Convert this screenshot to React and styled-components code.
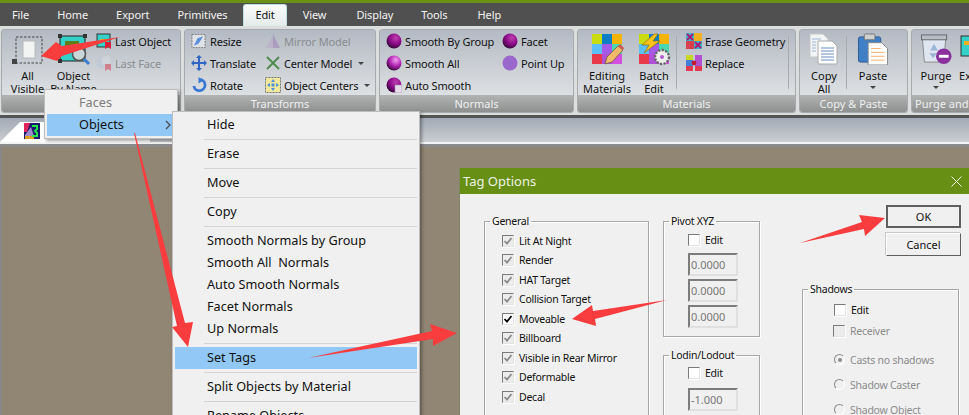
import React from 'react';
import styled, {createGlobalStyle} from 'styled-components';

const Global = createGlobalStyle`
  html, body { margin: 0; padding: 0; background: #918674; }
  body { font-family: "Noto Sans", "Liberation Sans", sans-serif; font-size: 11px; color: #111; }
`;

const Page = styled.div`
  position: relative;
  width: 969px;
  height: 415px;
  overflow: hidden;
  display: flex;
  flex-direction: column;
`;
const TopLine = styled.div`
  height: 3px;
  background: #6b9016;
`;
const TabBar = styled.div`
  height: 23px;
  background: #505050;
  display: flex;
  gap: 28px;
  padding-left: 12px;
  align-items: flex-end;
`;
const Tab = styled.div`
  position: relative;
  height: 22px;
  line-height: 22px;
  margin-left: ${p => p.$nudge || 0}px;
  font-size: 11px;
  letter-spacing: -.1px;
  color: ${p => (p.$active ? '#111' : '#f2f2f2')};
  &::before {
    content: ${p => (p.$active ? '""' : 'none')};
    position: absolute;
    z-index: 0;
    top: 0;
    bottom: 0;
    left: -12px;
    right: -12px;
    background: linear-gradient(#fbfcfc, #e4eaea);
    border: 1px solid #bfe0e0;
    border-bottom: none;
    border-radius: 3px 3px 0 0;
  }
  span { position: relative; }
`;
const Ribbon = styled.div`
  height: 89px;
  background: #dcdede;
  display: flex;
  gap: 2px;
  padding: 3px 0 2px 1px;
  box-sizing: border-box;
`;
const Group = styled.div`
  width: ${p => p.$w}px;
  flex: none;
  display: flex;
  flex-direction: column;
  border: 1px solid #a8abad;
  border-radius: 3px;
  box-sizing: border-box;
  margin-right: 1px;
  overflow: hidden;
  background: linear-gradient(#b4bac4, #e8eaea);
`;
const GroupBody = styled.div`
  flex: 1;
  display: flex;
  min-height: 0;
  padding-left: ${p => p.$pad || 0}px;
`;
const GroupLabel = styled.div`
  height: 17px;
  line-height: 18px;
  text-align: ${p => p.$left ? 'left' : 'center'};
  padding-left: ${p => p.$left ? 3 : 0}px;
  font-size: 11px;
  color: #eef0f0;
  white-space: nowrap;
  background: linear-gradient(#b2b4b4, #8e8f8f);
`;
const Big = styled.div`
  width: ${p => p.$w}px;
  flex: none;
  display: flex;
  flex-direction: column;
  align-items: center;
  padding-top: 3px;
  text-align: center;
  line-height: 13px;
  font-size: 11px;
  white-space: nowrap;
  svg { margin-bottom: 4px; flex: none; }
`;
const Caret = styled.i`
  display: block;
  width: 0;
  height: 0;
  margin: 4px auto 0;
  border: 3px solid transparent;
  border-top: 3px solid #444;
  border-bottom: none;
`;
const Column = styled.div`
  width: ${p => p.$w}px;
  flex: none;
`;
const Small = styled.div`
  height: 22px;
  display: flex;
  align-items: center;
  gap: 3px;
  white-space: nowrap;
  font-size: 11px;
  letter-spacing: -.15px;
  color: ${p => (p.$off ? '#8a8c8e' : '#111')};
  svg { flex: none; }
  i { margin: 0 0 0 3px; }
`;
const VLine = styled.div`
  width: 1px;
  flex: none;
  margin: 6px ${p => p.$gap || 9}px 6px ${p => p.$before || 0}px;
  background: #a8acae;
`;
const DocStrip = styled.div`
  height: 29px;
  border-top: 3px solid #555;
  border-bottom: 2px solid #f4f4f4;
  box-sizing: border-box;
  background: linear-gradient(#a2aab5, #cbced2);
`;
const DocTab = styled.div`
  width: 150px;
  height: 20px;
  margin-top: 4px;
  background: #fff;
  clip-path: polygon(20px 0, 100% 0, 100% 100%, 0 100%);
  padding: 1px 0 0 24px;
  box-sizing: border-box;
`;
const Canvas = styled.div`
  flex: 1;
  background: #918674;
  border-top: 3px solid #8a8a8a;
  border-left: 2px solid #888;
`;
const MenuBox = styled.div`
  position: absolute;
  left: ${p => p.$x}px;
  top: ${p => p.$y}px;
  width: ${p => p.$w}px;
  padding: 2px;
  box-sizing: border-box;
  background: #f0f0f0;
  border: 1px solid #bdbdbd;
  box-shadow: 2px 2px 3px rgba(0, 0, 0, .35);
  font-size: 12.7px;
`;
const MenuRow = styled.div`
  height: 22px;
  line-height: 21px;
  padding-left: ${p => p.$indent}px;
  position: relative;
  white-space: pre;
  color: ${p => (p.$off ? '#7d7d7d' : '#111')};
  background: ${p => (p.$on ? '#91c8f6' : 'transparent')};
  svg { position: absolute; right: 4px; top: 6px; }
`;
const MenuLine = styled.div`
  height: 1px;
  margin: 3px 0 3px 29px;
  background: #d4d4d4;
`;
const Dialog = styled.div`
  position: absolute;
  left: 459px;
  top: 168px;
  width: 510px;
  height: 260px;
  background: #f0f0f0;
  border-left: 1px solid #7f8a60;
  box-sizing: border-box;
`;
const TitleBar = styled.div`
  height: 26px;
  background: #678f14;
  color: #eef2e4;
  font-size: 13px;
  line-height: 26px;
  padding-left: 3px;
  display: flex;
  justify-content: space-between;
  align-items: center;
  svg { margin-right: 7px; }
`;
const DialogBody = styled.div`
  display: flex;
  align-items: flex-start;
  padding: 11px 0 0 24px;
  font-size: 10.5px;
  letter-spacing: -.25px;
`;
const Box = styled.fieldset`
  margin: ${p => p.$m || 0};
  padding: ${p => p.$pad || 0};
  width: ${p => p.$w}px;
  height: ${p => p.$h}px;
  box-sizing: border-box;
  border: 1px solid #a6a6a6;
  box-shadow: 1px 1px 0 #fff, inset 1px 1px 0 #fff;
  flex: none;
  legend {
    padding: 0 2px;
    margin-left: 5px;
    line-height: 16px;
  }
`;
const MiddleColumn = styled.div`
  width: 97px;
  flex: none;
  margin: 8px 42px 0 14px;
`;
const RightColumn = styled.div`
  width: 159px;
  flex: none;
`;
const CheckRow = styled.div`
  height: ${p => p.$h || 19.5}px;
  display: flex;
  align-items: center;
  gap: 5px;
  white-space: nowrap;
  margin: ${p => p.$top || 0}px 0 ${p => p.$after || 0}px ${p => p.$x || 0}px;
  color: ${p => (p.$off ? '#8c8c8c' : '#111')};
`;
const Tick = styled.span`
  width: 12px;
  height: 12px;
  flex: none;
  box-sizing: border-box;
  display: flex;
  align-items: center;
  justify-content: center;
  border: 1px solid #7a7a7a;
  border-right-color: #e3e3e3;
  border-bottom-color: #e3e3e3;
  box-shadow: 1px 1px 0 #fff;
  background: ${p => (p.$off ? '#ececec' : '#fff')};
`;
const Dot = styled.span`
  width: 11px;
  height: 11px;
  flex: none;
  box-sizing: border-box;
  border-radius: 50%;
  border: 1px solid #8a8a8a;
  border-right-color: #fff;
  border-bottom-color: #fff;
  display: flex;
  align-items: center;
  justify-content: center;
  &::after {
    content: ${p => (p.$on ? '""' : 'none')};
    width: 4px;
    height: 4px;
    border-radius: 50%;
    background: #8c8c8c;
  }
`;
const Field = styled.input`
  display: block;
  width: 50px;
  height: 23px;
  margin: 0 0 3px 24px;
  padding: 0 0 0 1px;
  box-sizing: border-box;
  font: 11px "Noto Sans", sans-serif;
  color: #777;
  background: #f0f0f0;
  border: 2px solid;
  border-color: #7c7c7c #e0e0e0 #e0e0e0 #7c7c7c;
  outline: none;
`;
const PushButton = styled.button`
  display: block;
  width: 75px;
  height: 23px;
  margin: 0 0 5px 84px;
  padding: 0;
  box-sizing: border-box;
  font: 11px "Noto Sans", sans-serif;
  color: #111;
  background: #f0f0f0;
  border: ${p => (p.$main ? 2 : 1)}px solid #5f5f5f;
  border-top-color: ${p => (p.$main ? '#5f5f5f' : '#fff')};
  border-left-color: ${p => (p.$main ? '#5f5f5f' : '#fff')};
  box-shadow: ${p => (p.$main ? 'none' : '-1px -1px 0 #c8c8c8')};
`;
const ArrowLayer = styled.svg`
  position: absolute;
  left: 0;
  top: 0;
  pointer-events: none;
`;

// small ribbon drawings
const swatches = ['#c8dc10', '#0e7fc4', '#f4b400', '#5bc0f5', '#a35ae6', '#49d6b0', '#e8394a', '#b14fd9', '#d24fe0'];
const Swatches = () => swatches.map((c, i) => (
  <rect key={i} x={1 + (i % 3) * 10} y={1 + Math.floor(i / 3) * 10} width="10" height="10" fill={c} />
));
const PencilPalette = () => (
  <svg width="32" height="32" viewBox="0 0 32 32" style={{overflow: 'visible'}}>
    <Swatches />
    <path d="M14 31l2-7L27 13l5 4L21 29z" fill="#f2b96b" stroke="#6b5a3a" strokeWidth=".8" />
    <path d="M27 13l2-2 4 4-1 2z" fill="#d9534f" />
  </svg>
);
const BatchPalette = () => (
  <svg width="32" height="32" viewBox="0 0 32 32" style={{overflow: 'visible'}}>
    <Swatches />
    <path d="M16 1L4 12l7 0-5 8 16-12-7 0 5-7z" fill="#f7c21a" stroke="#8d6b10" strokeWidth=".7" />
    <circle cx="24" cy="24" r="7" fill="#eee" stroke="#666" strokeWidth="2.4" strokeDasharray="2.2 1.4" />
    <circle cx="24" cy="24" r="2" fill="#b45ad0" />
  </svg>
);
const AllVisible = () => (
  <svg width="32" height="32" viewBox="0 0 32 32">
    <rect x="4" y="4" width="26" height="26" fill="none" stroke="#444" strokeDasharray="2.5 1.5" />
    <rect x="11" y="8" width="12" height="17" fill="#f2f3f3" stroke="#b9b9b9" />
    <rect x="0" y="26" width="5" height="5" fill="#444" />
  </svg>
);
const ByName = () => (
  <svg width="32" height="32" viewBox="0 0 32 32" style={{overflow: 'visible'}}>
    <rect x="2" y="3" width="25" height="25" fill="#35d0c8" stroke="#222" />
    <rect x="7" y="8" width="14" height="5" fill="#5c7f1a" />
    <circle cx="21" cy="21" r="6.5" fill="#c9d7d9" stroke="#555" strokeWidth="1.6" />
    <path d="M26 26l5 5" stroke="#3f7ed0" strokeWidth="3" />
    <rect x="0" y="1" width="4" height="4" fill="#333" /><rect x="25" y="1" width="4" height="4" fill="#333" />
    <rect x="0" y="26" width="4" height="4" fill="#333" />
  </svg>
);
const LastObject = ({off}) => (
  <svg width="16" height="16" viewBox="0 0 16 16" opacity={off ? .45 : 1}>
    {off
      ? <g><rect x="1" y="4" width="9" height="9" rx="3" fill="#b6c8dc" /><rect x="6" y="1" width="8" height="9" rx="3" fill="#d8dfe8" /></g>
      : <g><rect x="1" y="1" width="13" height="13" fill="#35d0c8" stroke="#333" /><rect x="4" y="6" width="7" height="3" fill="#e0b020" /></g>}
    <path d="M9 9l0 7 3-2 3 2 0-7z" fill="#d8203a" />
  </svg>
);
const Resize = () => (
  <svg width="16" height="16" viewBox="0 0 17 16">
    <rect x="1" y="1" width="14" height="14" fill="#dfe3e8" stroke="#777" strokeDasharray="2 1" />
    <path d="M3 13l5-2 5-8-6 2z" fill="#5d8fd8" />
  </svg>
);
const Translate = () => (
  <svg width="16" height="16" viewBox="0 0 16 16">
    <path d="M8 0l3 3H9v4h4V5l3 3-3 3V9H9v4h2l-3 3-3-3h2V9H3v2L0 8l3-3v2h4V3H5z" fill="#2f66c4" />
  </svg>
);
const Rotate = () => (
  <svg width="16" height="16" viewBox="0 0 17 17">
    <path d="M9 2.5a6 6 0 1 1-6 7" fill="none" stroke="#3a78d2" strokeWidth="3" />
    <path d="M8 0v7l5-3z" fill="#3a78d2" />
  </svg>
);
const Mirror = () => (
  <svg width="16" height="16" viewBox="0 0 16 16" opacity=".55">
    <path d="M8 1L1 15h7z" fill="#b7a9c7" /><path d="M8 1l7 14H8z" fill="#9c80b4" />
  </svg>
);
const Center = () => (
  <svg width="16" height="16" viewBox="0 0 16 16">
    <path d="M2 2l12 12M14 2L2 14" stroke="#4d8a4c" strokeWidth="1.8" />
  </svg>
);
const Centers = () => (
  <svg width="16" height="16" viewBox="0 0 16 16">
    <rect x=".5" y=".5" width="15" height="15" fill="#f0e89a" stroke="#777" strokeDasharray="2 1" />
    <path d="M8 2l2 3H6zM8 14l2-3H6zM2 8l3-2v4zM14 8l-3-2v4z" fill="#4f8fdc" />
    <rect x="6.5" y="6.5" width="3" height="3" fill="#4f8fdc" />
  </svg>
);
const Ball = ({light, flat, page}) => (
  <svg width="16" height="16" viewBox="0 0 16 16">
    <defs>
      <radialGradient id={light ? 'ballB' : 'ballA'} cx=".62" cy=".3" r=".75">
        <stop offset="0" stopColor={light ? '#f0a0f0' : '#c040b0'} />
        <stop offset=".55" stopColor={light ? '#b020b0' : '#8a0a88'} />
        <stop offset="1" stopColor="#2c0a30" />
      </radialGradient>
    </defs>
    <circle cx="8" cy="8" r="7.5" fill={flat ? '#9a68cc' : `url(#${light ? 'ballB' : 'ballA'})`} />
    {page && <rect x="9" y="8" width="7" height="8" fill="#e4dce8" stroke="#a78cb0" strokeWidth=".6" />}
  </svg>
);
const EraseGeo = () => (
  <svg width="16" height="16" viewBox="0 0 16 16">
    <rect width="16" height="16" fill="#3fb5c8" /><rect x="8" width="8" height="8" fill="#f0b020" /><rect y="8" width="8" height="8" fill="#d84050" />
    <path d="M1 1l6 6M7 1L1 7M9 9l6 6M15 9l-6 6" stroke="#a81e7a" strokeWidth="2" />
  </svg>
);
const ReplaceIcon = () => (
  <svg width="16" height="16" viewBox="0 0 16 16">
    <rect width="7" height="16" fill="#3f7fd8" /><rect x="9" width="7" height="16" fill="#b04fd0" />
    <rect width="7" height="5" fill="#c8d820" /><rect x="9" y="11" width="7" height="5" fill="#e03a50" />
    <rect y="11" width="7" height="5" fill="#e03a50" /><circle cx="8" cy="8" r="2.4" fill="#c01c30" />
  </svg>
);
const CopyIcon = () => (
  <svg width="30" height="32" viewBox="0 0 30 32">
    <path d="M1 1h13l5 5v18H1z" fill="#f3f4f6" stroke="#c6c6c6" />
    <path d="M9 8h14l5 5v18H9z" fill="#fff" stroke="#aaa" />
    <path d="M12 15h13M12 18h13M12 21h13M12 24h13M12 27h13" stroke="#6a8cc4" />
    <path d="M3 6h9M3 9h4M3 12h4M3 15h4M3 18h4" stroke="#9db6dc" />
  </svg>
);
const PasteIcon = () => (
  <svg width="32" height="32" viewBox="0 0 32 33">
    <rect x="1" y="4" width="23" height="26" rx="2" fill="#3f7fc6" stroke="#2b5a94" />
    <rect x="7" y="1" width="11" height="6" rx="1" fill="#d0d0d0" stroke="#777" />
    <path d="M11 10h14l6 6v17H11z" fill="#fff" stroke="#888" />
    <path d="M14 16h10M14 20h14M14 24h14M14 28h14" stroke="#f4b070" />
  </svg>
);
const PurgeIcon = () => (
  <svg width="32" height="32" viewBox="0 0 32 33" style={{overflow: 'visible'}}>
    <path d="M2 6h24l-2 24H4z" fill="#dfe6f2" stroke="#888" />
    <rect x="1" y="2" width="26" height="5" fill="#b8bec6" stroke="#666" />
    <path d="M14 11l4 7h-8zM9 21h8l-4 5z" fill="#9cb6d8" />
    <circle cx="24" cy="24" r="8" fill="#8a2f9e" />
    <rect x="19" y="22.5" width="10" height="3" fill="#fff" />
  </svg>
);
const ExIcon = () => (
  <svg width="26" height="32" viewBox="0 0 26 32">
    <rect x="9" y="3" width="19" height="20" fill="#35d0c8" stroke="#333" />
    <rect x="12" y="8" width="10" height="4" fill="#f0b020" />
  </svg>
);
const Chevron = () => (
  <svg width="6" height="10" viewBox="0 0 6 10"><path d="M1 1l4 4-4 4" fill="none" stroke="#444" strokeWidth="1.1" /></svg>
);
const DocIcon = () => (
  <svg width="16" height="16" viewBox="0 0 16 16">
    <rect width="16" height="16" fill="#1a1a6a" />
    <path d="M0 0h6L3 9H0z" fill="#e0245a" /><path d="M1 12l6-8 3 9H1z" fill="#9d8ccc" />
    <rect x="1" y="13" width="9" height="3" fill="#e0a020" />
    <path d="M8 3h5v3l-2 2 2 2v3H8" fill="none" stroke="#22e84a" strokeWidth="2" />
  </svg>
);
const CheckMark = ({color}) => (
  <svg width="10" height="10" viewBox="0 0 10 10"><path d="M1.5 5l2.5 2.6L8.5 2" fill="none" stroke={color} strokeWidth="1.8" /></svg>
);
const CloseX = () => (
  <svg width="11" height="11" viewBox="0 0 11 11"><path d="M.5.5l10 10M10.5.5l-10 10" stroke="#f2f4ea" strokeWidth="1" /></svg>
);

const tabs = [['File'], ['Home'], ['Export'], ['Primitives'], ['Edit'], ['View'], ['Display', 2], ['Tools'], ['Help', 2]];
const generalRows = [
  ['Lit At Night', true], ['Render', true], ['HAT Target', true], ['Collision Target', true],
  ['Moveable', false], ['Billboard', true], ['Visible in Rear Mirror', true], ['Deformable', true], ['Decal', true],
];
const objectRows = [
  ['Hide'], null, ['Erase'], null, ['Move'], null, ['Copy'], null,
  ['Smooth Normals by Group'], ['Smooth All  Normals'], ['Auto Smooth Normals'], ['Facet Normals'], ['Up Normals'], null,
  ['Set Tags', true], null, ['Split Objects by Material'], null, ['Rename Objects'],
];
const arrows = [
  '120,37 62,46 56,42 41,56 57,61 62,56',
  '134,133 135,133 185,323 193,322 188,347 172,327 177,326',
  '308,358 432,331 430,324 457,333 433,346 433,339',
  '667,300 593,311 592,305 572,319 596,326 595,319',
  '800,243 862,222 859,215 885,218 865,236 864,229',
];

function App() {
  return (
    <Page>
      <Global />
      <TopLine />
      <TabBar>
        {tabs.map(([t, nudge]) => (
          <Tab key={t} $active={t === 'Edit'} $nudge={nudge}><span>{t}</span></Tab>
        ))}
      </TabBar>
      <Ribbon>
        <Group $w={180}>
          <GroupBody $pad={2}>
            <Big $w={47}><AllVisible />All<br />Visible</Big>
            <Big $w={45}><ByName />Object<br />By Name</Big>
            <Column $w={84}>
              <Small><LastObject />Last Object</Small>
              <Small $off><LastObject off />Last Face</Small>
            </Column>
          </GroupBody>
          <GroupLabel />
        </Group>
        <Group $w={192}>
          <GroupBody $pad={6}>
            <Column $w={74}>
              <Small><Resize />Resize</Small>
              <Small><Translate />Translate</Small>
              <Small><Rotate />Rotate</Small>
            </Column>
            <Column $w={110}>
              <Small $off><Mirror />Mirror Model</Small>
              <Small><Center />Center Model<Caret /></Small>
              <Small><Centers />Object Centers<Caret /></Small>
            </Column>
          </GroupBody>
          <GroupLabel>Transforms</GroupLabel>
        </Group>
        <Group $w={195}>
          <GroupBody $pad={6}>
            <Column $w={116}>
              <Small><Ball />Smooth By Group</Small>
              <Small><Ball light />Smooth All</Small>
              <Small><Ball page />Auto Smooth</Small>
            </Column>
            <Column $w={64}>
              <Small><Ball />Facet</Small>
              <Small><Ball flat />Point Up</Small>
            </Column>
          </GroupBody>
          <GroupLabel>Normals</GroupLabel>
        </Group>
        <Group $w={219}>
          <GroupBody $pad={4}>
            <Big $w={50}><PencilPalette />Editing<br />Materials</Big>
            <Big $w={44}><BatchPalette />Batch<br />Edit</Big>
            <VLine $before={0} />
            <Column $w={102}>
              <Small><EraseGeo />Erase Geometry</Small>
              <Small><ReplaceIcon />Replace</Small>
            </Column>
            <VLine />
          </GroupBody>
          <GroupLabel>Materials</GroupLabel>
        </Group>
        <Group $w={109}>
          <GroupBody $pad={2}>
            <Big $w={44}><CopyIcon />Copy<br />All</Big>
            <VLine $gap={1} />
            <Big $w={50}><PasteIcon />Paste<Caret /></Big>
          </GroupBody>
          <GroupLabel>Copy &amp; Paste</GroupLabel>
        </Group>
        <Group $w={70}>
          <GroupBody $pad={8}>
            <Big $w={32}><PurgeIcon />Purge<Caret /></Big>
            <Big $w={26}><ExIcon />Ex</Big>
          </GroupBody>
          <GroupLabel $left>Purge and</GroupLabel>
        </Group>
      </Ribbon>
      <DocStrip>
        <DocTab><DocIcon /></DocTab>
      </DocStrip>
      <Canvas />

      <MenuBox $x={44} $y={89} $w={134}>
        <MenuRow $indent={32} $off>Faces</MenuRow>
        <MenuRow $indent={32} $on>Objects<Chevron /></MenuRow>
      </MenuBox>
      <MenuBox $x={172} $y={111} $w={248}>
        {objectRows.map((r, i) => (r
          ? <MenuRow key={i} $indent={32} $on={r[1]}>{r[0]}</MenuRow>
          : <MenuLine key={i} />))}
      </MenuBox>

      <Dialog>
        <TitleBar>Tag Options<CloseX /></TitleBar>
        <DialogBody>
          <Box $w={165} $h={220} $m="8px 0 0" $pad="2px 0 0">
            <legend>General</legend>
            {generalRows.map(([label, off]) => (
              <CheckRow key={label} $x={17}>
                <Tick $off={off}><CheckMark color={off ? '#8a8a8a' : '#000'} /></Tick>
                {label}
              </CheckRow>
            ))}
          </Box>
          <MiddleColumn>
            <Box $w={97} $h={124} $pad="1px 0 0">
              <legend>Pivot XYZ</legend>
              <CheckRow $x={24} $after={3}><Tick />Edit</CheckRow>
              <Field readOnly value="0.0000" />
              <Field readOnly value="0.0000" />
              <Field readOnly value="0.0000" />
            </Box>
            <Box $w={97} $h={80} $m="10px 0 0">
              <legend>Lodin/Lodout</legend>
              <CheckRow $x={24} $after={5}><Tick />Edit</CheckRow>
              <Field readOnly value="-1.000" />
            </Box>
          </MiddleColumn>
          <RightColumn>
            <PushButton $main>OK</PushButton>
            <PushButton>Cancel</PushButton>
            <Box $w={157} $h={140} $m="25px 0 0" $pad="3px 0 0">
              <legend>Shadows</legend>
              <CheckRow $x={31} $h={20}><Tick />Edit</CheckRow>
              <CheckRow $x={30} $h={21} $off><Tick $off />Receiver</CheckRow>
              <CheckRow $x={31} $h={25} $top={6} $off><Dot $on />Casts no shadows</CheckRow>
              <CheckRow $x={31} $h={25} $off><Dot />Shadow Caster</CheckRow>
              <CheckRow $x={31} $h={25} $off><Dot />Shadow Object</CheckRow>
            </Box>
          </RightColumn>
        </DialogBody>
      </Dialog>

      <ArrowLayer width="969" height="415" viewBox="0 0 969 415">
        {arrows.map(a => <polygon key={a} points={a} fill="#f93c3e" />)}
      </ArrowLayer>
    </Page>
  );
}

export default App;
